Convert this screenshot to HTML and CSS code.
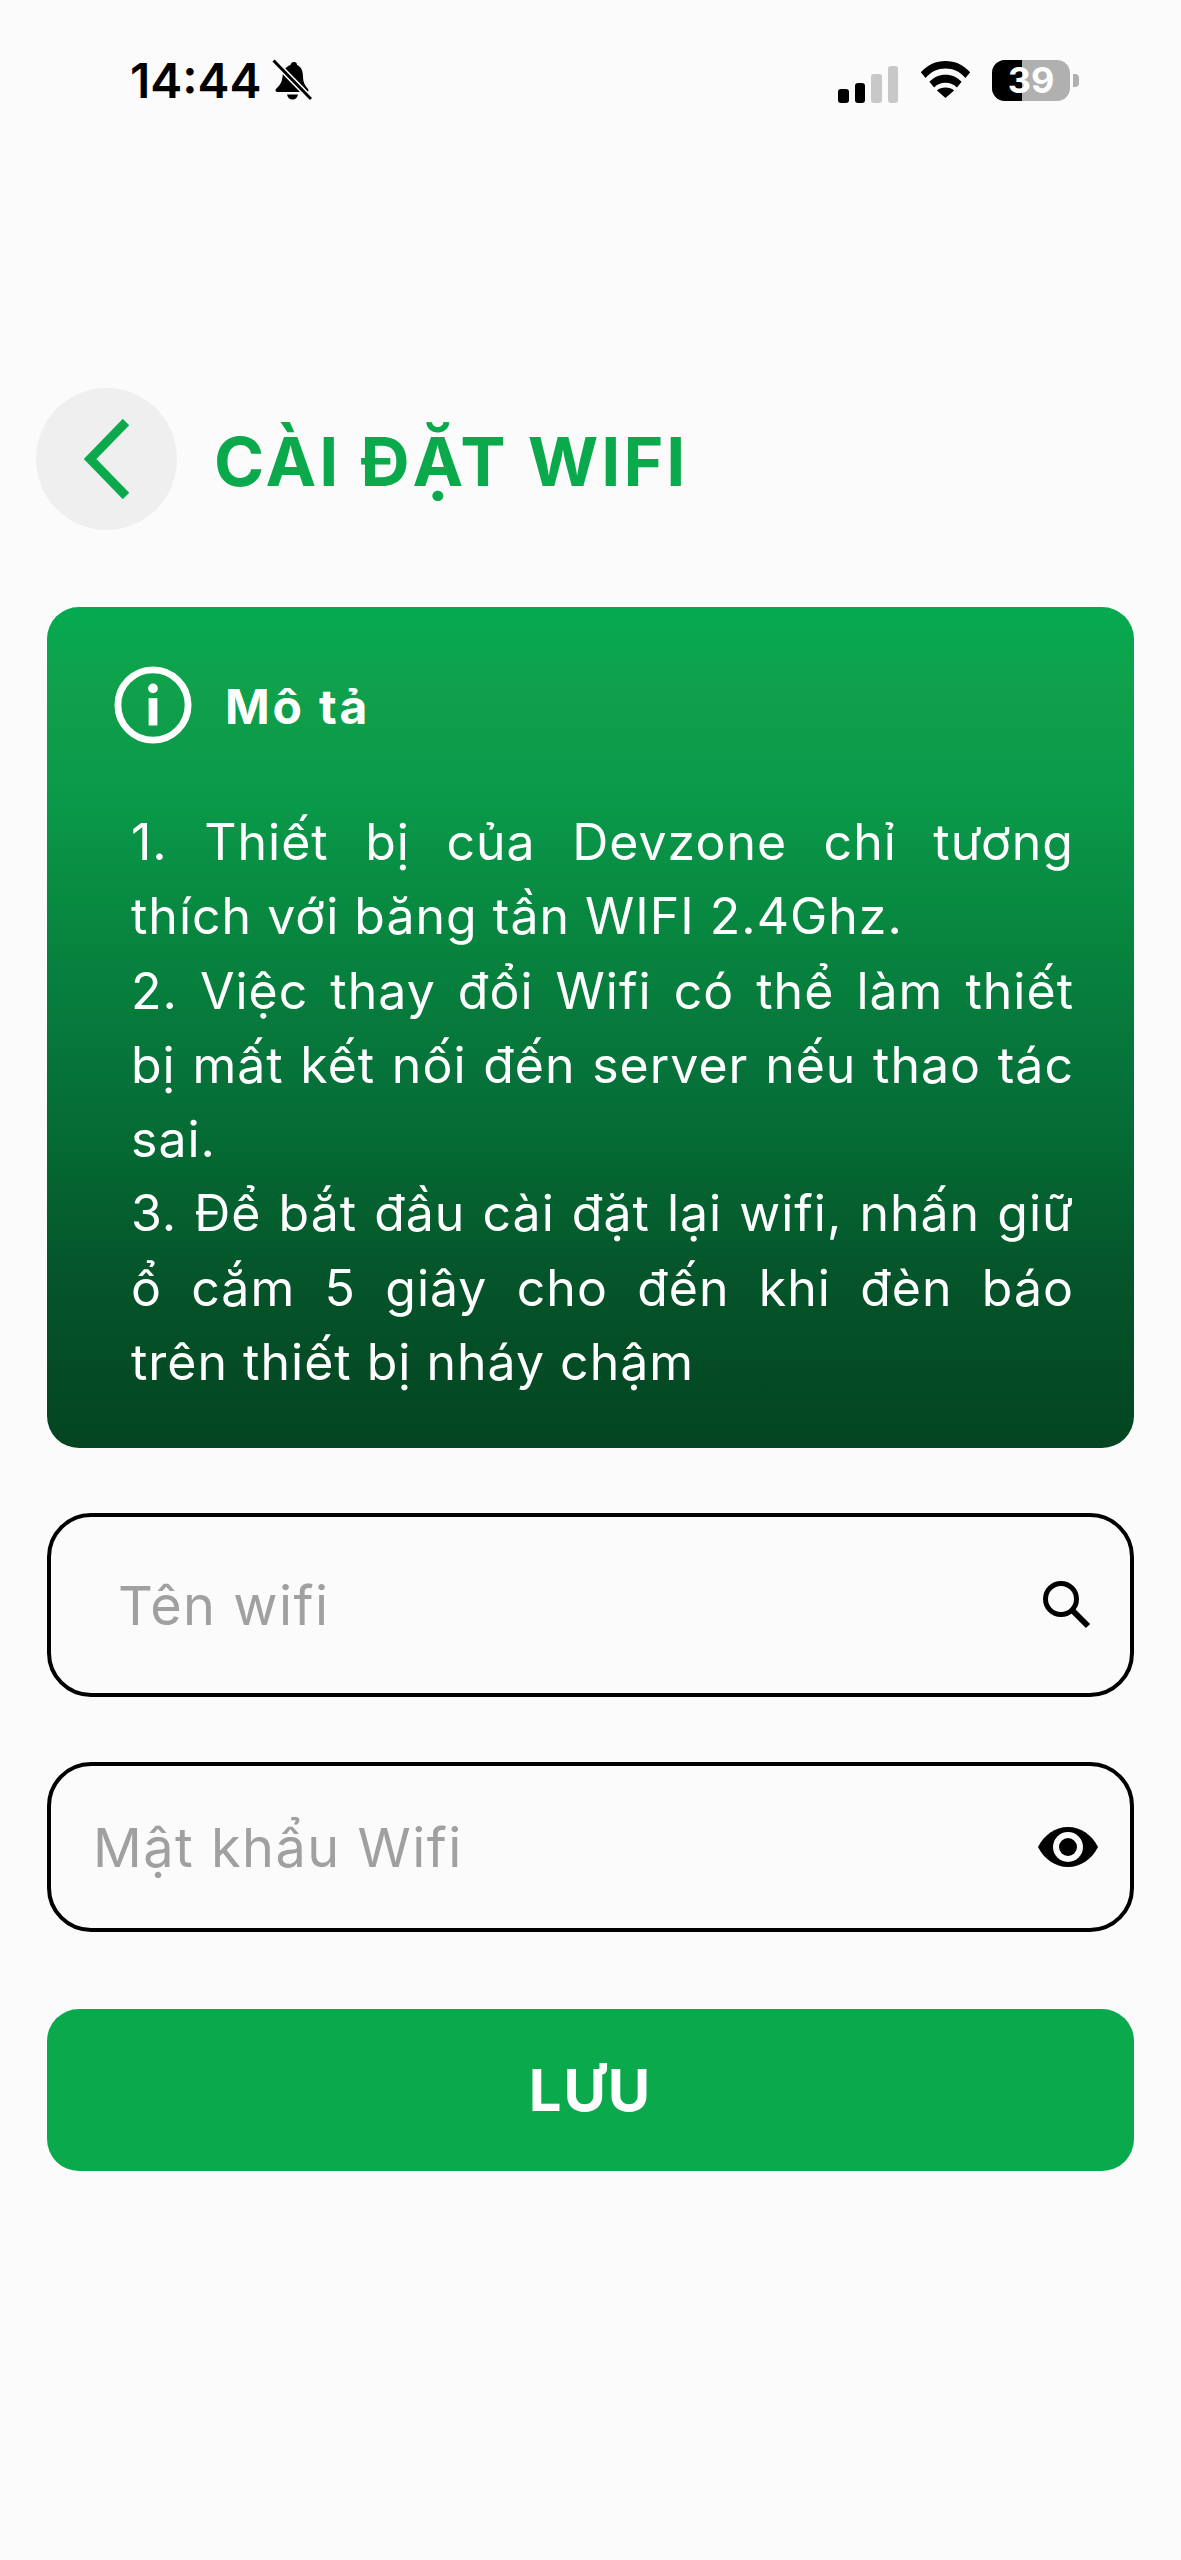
FILE: index.html
```html
<!DOCTYPE html>
<html lang="vi">
<head>
<meta charset="UTF-8" />
<meta name="viewport" content="width=device-width, initial-scale=1.0"/>
<title>Cài đặt Wifi</title>
<link rel="stylesheet" href="styles.css">
</head>
<body>

<div class="status-bar">
  <div class="status-left">
    <span class="time">14:44</span>
    <svg class="bell" viewBox="0 0 40 42">
      <path d="M22 3c-2 0-3 1-3.500 3C13 8 11 12 10.500 18c-.5 5-2.500 8-6.500 12-1 1-.5 3 1.500 3h29c2 0 2.500-2 1.500-3-3-3-5-7-5-12 0-6-1.500-10-6-12C25 4 24 3 22 3z" fill="#000"/>
      <path d="M15 35.500h11c-.5 3-2.500 5-5.500 5s-5-2-5.500-5z" fill="#000"/>
      <path d="M1 1 L39 40" stroke="#fbfbfb" stroke-width="6"/>
      <path d="M1.500 1.500 L39 40" stroke="#000" stroke-width="3"/>
    </svg>
  </div>
  <div class="status-right">
    <div class="signal">
      <span class="bar bar1"></span>
      <span class="bar bar2"></span>
      <span class="bar bar3"></span>
      <span class="bar bar4"></span>
    </div>
    <svg class="wifi" viewBox="0 0 54 40">
      <path d="M1 13C8 5 17 1 27 1s19 4 26 12l-5 6C42 12 35 9 27 9S12 12 6 19z" fill="#000"/>
      <path d="M10 23c5-5 10-7.500 17-7.500S39 18 44 23l-5 6c-3.500-3.500-7-5-12-5s-8.500 1.500-12 5z" fill="#000"/>
      <path d="M18 32c2.500-2 5.500-3 9-3s6.500 1 9 3l-9 8z" fill="#000"/>
    </svg>
    <div class="battery">
      <div class="battery-body">
        <div class="battery-fill"></div>
        <span class="battery-num">39</span>
      </div>
      <div class="battery-tip"></div>
    </div>
  </div>
</div>

<div class="header">
  <button class="back">
    <svg viewBox="0 0 46 80" class="back-icon">
      <path d="M42 3 L6 40 L42 77" fill="none" stroke="#0aaa4c" stroke-width="9"/>
    </svg>
  </button>
  <h1 class="title">CÀI ĐẶT WIFI</h1>
</div>

<div class="card">
  <div class="card-head">
    <svg class="info" viewBox="0 0 80 80">
      <circle cx="40" cy="40" r="36" fill="none" stroke="#fff" stroke-width="7"/>
      <circle cx="40" cy="23" r="5" fill="#fff"/>
      <rect x="35.500" y="33" width="9" height="28" fill="#fff"/>
    </svg>
    <span class="card-title">Mô tả</span>
  </div>
  <p class="card-text">1. Thiết bị của Devzone chỉ tương thích với băng tần WIFI 2.4Ghz.<br>2. Việc thay đổi Wifi có thể làm thiết bị mất kết nối đến server nếu thao tác sai.<br>3. Để bắt đầu cài đặt lại wifi, nhấn giữ ổ cắm 5 giây cho đến khi đèn báo trên&nbsp;thiết bị nháy chậm</p>
</div>

<div class="field field-name">
  <span class="placeholder">Tên wifi</span>
  <svg class="search" viewBox="0 0 50 50">
    <circle cx="19" cy="19" r="15.500" fill="none" stroke="#000" stroke-width="5"/>
    <path d="M30 30 L46 46" stroke="#000" stroke-width="6"/>
  </svg>
</div>

<div class="field field-pass">
  <span class="placeholder">Mật khẩu Wifi</span>
  <svg class="eye" viewBox="0 0 60 40">
    <path d="M0 20C6 8 17 0 30 0s24 8 30 20c-6 12-17 20-30 20S6 32 0 20z" fill="#000"/>
    <circle cx="30" cy="20" r="15" fill="#fbfbfb"/>
    <circle cx="30" cy="20" r="9" fill="#000"/>
  </svg>
</div>

<button class="save">LƯU</button>

</body>
</html>
```

FILE: styles.css
```css
* {
  box-sizing: border-box;
}
body {
  margin: 0;
  height: 2560px;
  padding: 0 47px;
  background-color: #fbfbfb;
  font-family: Inter, "Noto Sans", sans-serif;
}
.status-bar {
  display: flex;
  justify-content: space-between;
  align-items: center;
  height: 80px;
  margin: 40px 0 0;
  padding: 0 55px 0 83px;
}
.status-left {
  display: flex;
  align-items: center;
  gap: 10px;
}
.time {
  font-size: 48px;
  font-weight: 600;
  color: #000;
}
.bell {
  width: 40px;
  height: 42px;
}
.status-right {
  display: flex;
  align-items: center;
}
.signal {
  display: flex;
  align-items: flex-end;
  gap: 6px;
  margin-top: 8px;
  margin-right: 21px;
}
.bar {
  width: 10.500px;
  border-radius: 3px;
  background-color: #000;
}
.bar1 { height: 14px; }
.bar2 { height: 20px; }
.bar3 { height: 29px; background-color: #c8c8c8; }
.bar4 { height: 37px; background-color: #c8c8c8; }
.wifi {
  width: 53px;
  height: 38px;
  margin: 0 20px 2px 0;
}
.battery {
  display: flex;
  align-items: center;
  gap: 3px;
}
.battery-body {
  position: relative;
  width: 78px;
  height: 41px;
  border-radius: 13px;
  background-color: #b0b0b0;
  display: flex;
  align-items: center;
  justify-content: center;
}
.battery-fill {
  position: absolute;
  left: 0;
  top: 0;
  bottom: 0;
  width: 30px;
  border-radius: 13px 0 0 13px;
  background-color: #000;
}
.battery-num {
  position: relative;
  font-size: 36px;
  line-height: 41px;
  font-weight: 700;
  color: #fff;
}
.battery-tip {
  width: 6px;
  height: 13px;
  border-radius: 0 4px 4px 0;
  background-color: #b0b0b0;
}
.header {
  display: flex;
  align-items: center;
  gap: 37px;
  margin: 268px 0 0 -11px;
}
.back {
  display: flex;
  align-items: center;
  justify-content: center;
  width: 141px;
  height: 142px;
  padding: 0;
  border: none;
  border-radius: 50%;
  background-color: #efefef;
}
.back-icon {
  width: 46px;
  height: 80px;
}
.title {
  margin: 3px 0 0;
  font-size: 68px;
  font-weight: 700;
  letter-spacing: 3px;
  color: #0aaa4c;
}
.card {
  height: 841px;
  margin-top: 77px;
  padding: 59px 60px 0 84px;
  border-radius: 32px;
  background: linear-gradient(#05aa50, #10a04b 10%, #0a9a4a 22%, #07843e 40%, #06733a 55%, #046a33 64%, #05542a 80%, #034520);
  color: #fff;
}
.card-head {
  display: flex;
  align-items: center;
  gap: 33px;
  margin-left: -17px;
}
.info {
  width: 78px;
  height: 78px;
}
.card-title {
  margin-top: 2px;
  font-size: 48px;
  font-weight: 700;
  letter-spacing: 2.800px;
}
.card-text {
  margin: 61px 0 0;
  font-size: 50px;
  line-height: 74.300px;
  letter-spacing: 1px;
  text-align: justify;
}
.field {
  display: flex;
  align-items: center;
  justify-content: space-between;
  border: 4px solid #000;
  border-radius: 44px;
}
.field-name {
  height: 184px;
  margin-top: 65px;
  padding: 0 38px 0 67px;
}
.field-pass {
  height: 170px;
  margin-top: 65px;
  padding: 0 32px 0 42px;
}
.placeholder {
  font-size: 54px;
  letter-spacing: 1.500px;
  color: #a0a0a0;
}
.search {
  width: 50px;
  height: 50px;
}
.eye {
  width: 60px;
  height: 40px;
}
.save {
  display: block;
  width: 100%;
  height: 162px;
  margin-top: 77px;
  border: none;
  border-radius: 32px;
  background-color: #0aaa4c;
  color: #fff;
  font-family: inherit;
  font-size: 58px;
  font-weight: 700;
  letter-spacing: 2px;
}
```
